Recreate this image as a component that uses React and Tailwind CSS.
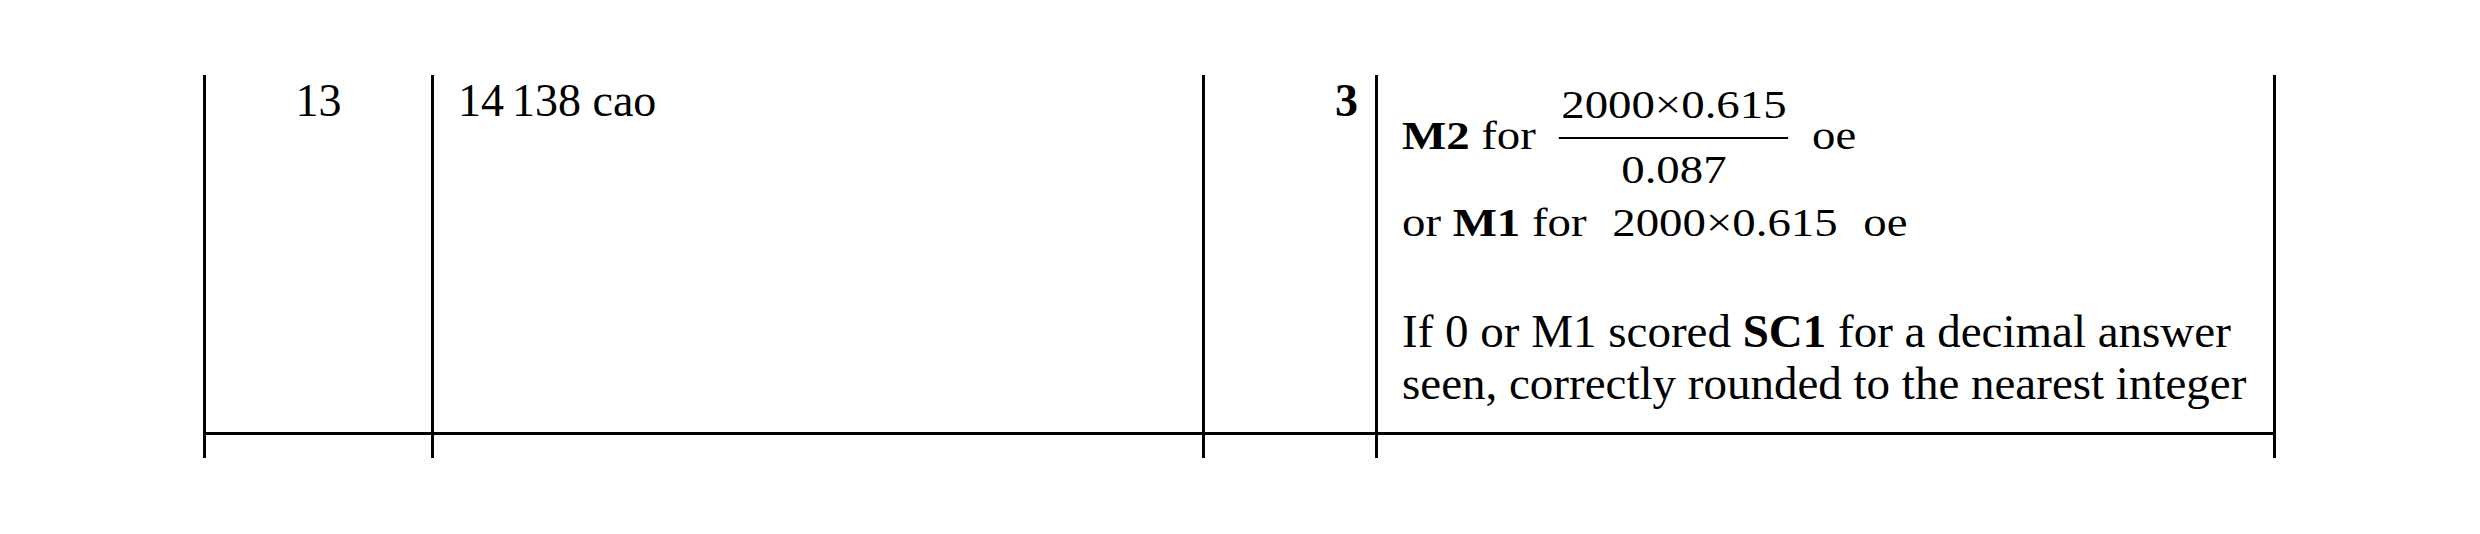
function Fraction({ top, bottom }) {
  return (
    <div className="flex w-[196px] flex-col items-center">
      <div className="leading-[44px]">{top}</div>
      <div className="mt-[10px] h-[2px] w-full bg-black" />
      <div className="mt-[9px] leading-[44px]">{bottom}</div>
    </div>
  );
}

function MarkCell() {
  return (
    <div className="w-[901px] border-x-[3px] border-black pl-[24px] pt-[8px]">
      <div className="flex origin-left scale-x-[1.17] items-start whitespace-nowrap text-[40px]">
        <div className="mt-[31px] leading-[44px]">
          <b>M2</b> for
        </div>
        <div className="ml-[20px]">
          <Fraction top="2000×0.615" bottom="0.087" />
        </div>
        <div className="ml-[20px] mt-[31px] leading-[44px]">oe</div>
      </div>
      <div className="mt-[9px] flex origin-left scale-x-[1.17] whitespace-nowrap text-[40px] leading-[44px]">
        <span>
          or <b>M1</b> for
        </span>
        <span className="ml-[22px]">2000×0.615</span>
        <span className="ml-[22px]">oe</span>
      </div>
      <p className="mt-[60px] whitespace-nowrap text-[47px] leading-[52px]">
        If 0 or M1 scored <b>SC1</b> for a decimal answer
        <br />
        seen, correctly rounded to the nearest integer
      </p>
    </div>
  );
}

export default function App() {
  return (
    <div className="min-h-[534px] bg-white pl-[203px] pt-[75px] font-['Liberation_Serif',serif] text-black">
      <div className="flex h-[360px] w-[2073px] border-b-[3px] border-black">
        <div className="w-[228px] border-l-[3px] border-black text-center text-[46px] leading-[52px]">
          13
        </div>
        <div className="w-[771px] border-l-[3px] border-black pl-[24px] text-[46px] leading-[52px]">
          14<span className="ml-[8px]">138</span> cao
        </div>
        <div className="w-[173px] border-l-[3px] border-black pr-[17px] text-right text-[46px] font-bold leading-[52px]">
          3
        </div>
        <MarkCell />
      </div>
      <div className="flex h-[23px] w-[2073px]">
        <div className="w-[228px] border-l-[3px] border-black" />
        <div className="w-[771px] border-l-[3px] border-black" />
        <div className="w-[173px] border-l-[3px] border-black" />
        <div className="w-[901px] border-x-[3px] border-black" />
      </div>
    </div>
  );
}
